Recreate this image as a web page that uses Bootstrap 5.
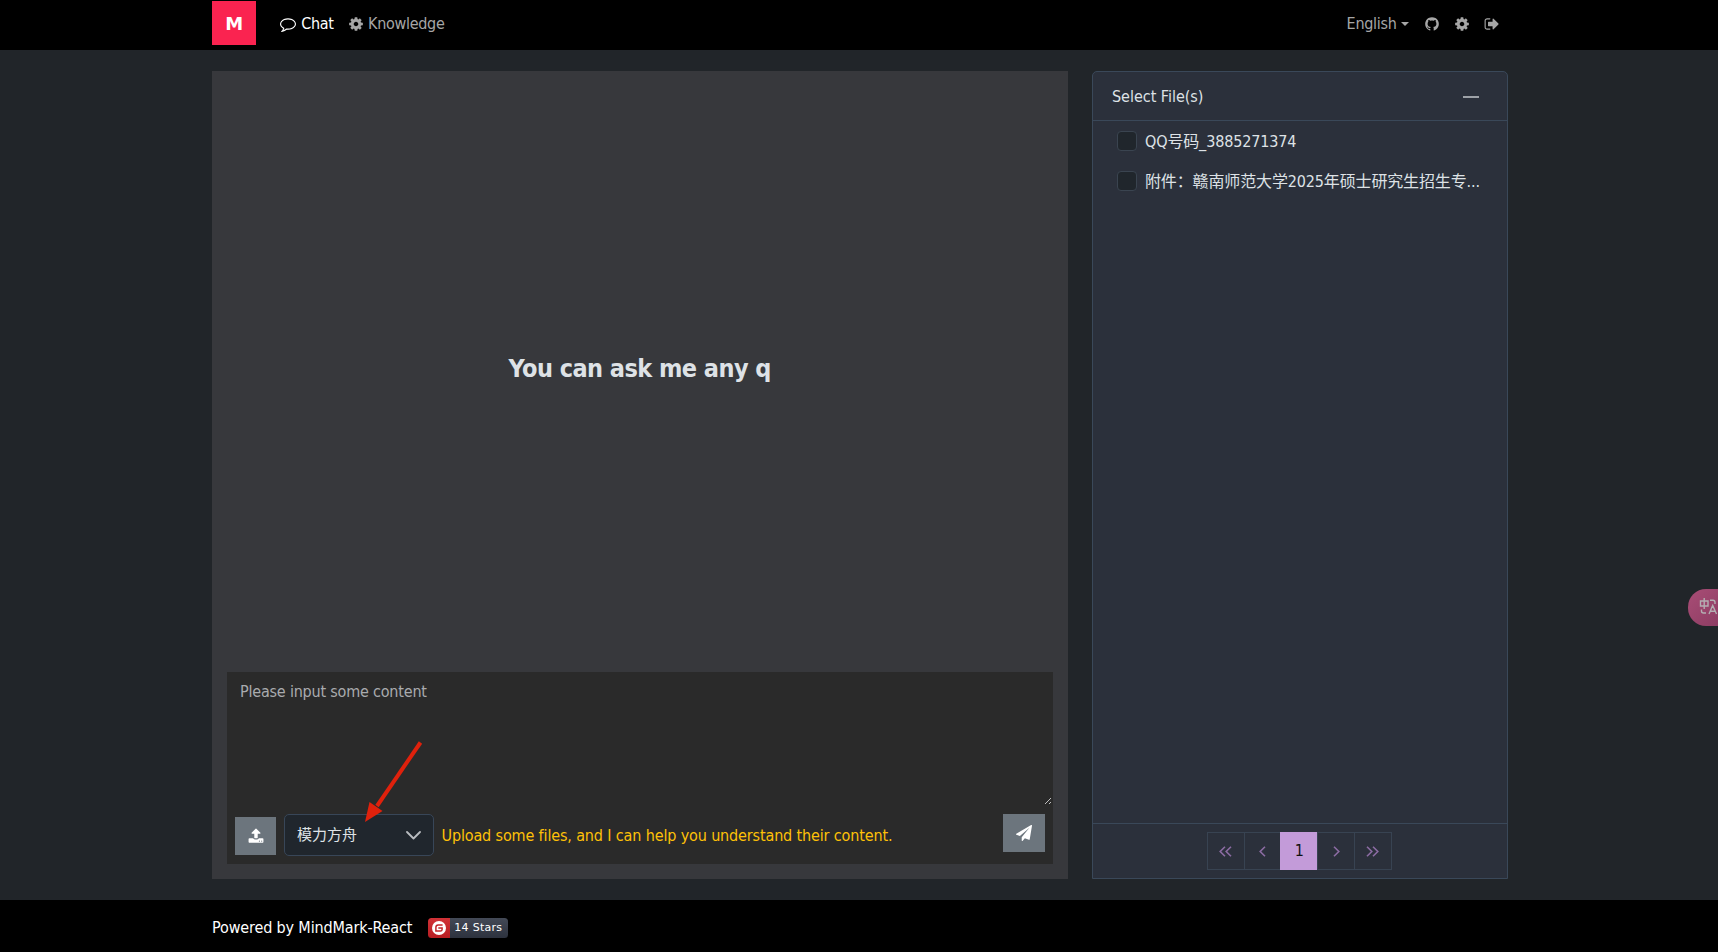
<!DOCTYPE html>
<html lang="en" data-bs-theme="dark">
<head>
<meta charset="utf-8">
<title>MindMark</title>
<link href="https://cdn.jsdelivr.net/npm/bootstrap@5.3.0/dist/css/bootstrap.min.css" rel="stylesheet">
<style>
body{height:952px;overflow:hidden;background:#212529;color:#dee2e6;font-family:"DejaVu Sans Condensed","Noto Sans CJK SC",sans-serif;font-size:16px;letter-spacing:-.14px}
.page-wrap{width:1320px;margin:0 auto;padding:0 11.5px 0 13px}
.topbar{height:50px;background:#000;color:#a6a6a6;padding:0;letter-spacing:-.3px}
.brand-box{width:44px;height:44px;background:#fa2350;color:#fff;font:bold 18px "DejaVu Sans",sans-serif;margin:-4px 24px 0 0}
.fa{fill:currentColor;display:block;flex:none}
.topbar .item{margin-top:-3px;display:flex;align-items:center;white-space:nowrap}
.caret{border:4.5px solid transparent;border-top-color:currentColor;border-bottom:0;margin-left:4px}
main{height:850px;padding:21px 0 21px}
.chat-panel{width:856px;background:#37383c;padding:15px 15.5px 15px 15px}
.hero{font-weight:700;font-size:25px;letter-spacing:-.55px;color:#dee2e6;padding-bottom:21px}
.composer{height:192px;background:#2a2a2a;position:relative}
.composer textarea{height:134px;background:transparent;border:0;padding:8px 13px;resize:none;outline:0;color:#dee2e6;letter-spacing:-.2px}
.composer textarea::placeholder{color:#a9abae;opacity:1}
.grip{position:absolute;right:1px;top:125px}
.sq{background:#6c757d;color:#fff;border:0;border-radius:0;padding:0;display:flex;align-items:center;justify-content:center}
.model{width:150px;height:42px;border:1px solid #384658;border-radius:5px;background:#20262d;padding:1px 12px 0;letter-spacing:0;font-size:15px}
.hint{color:#ffc107}
.files{width:415.5px;background:#2b303b;border:1px solid #3a4859;border-radius:5px 5px 0 0;overflow:hidden}
.files-head{height:49px;border-bottom:1px solid #3a4859;padding:1px 28px 0 19px;letter-spacing:-.02px}
.check{width:20px;height:20px;border:1px solid #3a4450;border-radius:4px;background:#20262c;flex:none;margin-right:8px}
.file-row{height:40px;padding-left:24px;white-space:nowrap}
.file-row .file-name{padding-top:2px}
.files-foot{height:55px;border-top:1px solid #3a4859}
.pager{display:flex;height:38px}
.pager span{width:37.7px;margin-left:-1px;border:1px solid #384352;display:flex;align-items:center;justify-content:center;color:#8c6ca3}
.pager span.on{background:#c39bd9;border-color:#c39bd9;color:#111;width:38px}
.bottombar{height:52px;background:#000;color:#fff;padding-top:3px}
.stars{height:20px;border-radius:3.5px;overflow:hidden;width:80px;font:11px "DejaVu Sans",sans-serif;letter-spacing:.28px;color:#fff;margin-left:16px}
.stars .g{width:22px;height:20px;background:linear-gradient(#d13237,#b81d22)}
.stars .t{background:linear-gradient(#434956,#2d323e);flex:1;height:20px;line-height:20px;padding-left:4px;white-space:nowrap}
.arrow{position:absolute;left:362px;top:738px}
.trans{position:absolute;left:1688px;top:589px;width:30px;height:37px;border-radius:18px 0 0 18px;background:linear-gradient(135deg,#a94d76,#8d3d63);color:#b4aeb2}
</style>
</head>
<body>
<svg width="0" height="0" class="d-none"><defs>
<symbol id="cog" viewBox="0 0 1792 1792"><path d="M1152 896q0-106-75-181t-181-75-181 75-75 181 75 181 181 75 181-75 75-181zm512-109v222q0 12-8 23t-20 13l-185 28q-19 54-39 91 35 50 107 138 10 12 10 25t-9 23q-27 37-99 108t-94 71q-12 0-26-9l-138-108q-44 23-91 38-16 136-29 186-7 28-36 28h-222q-14 0-24.5-8.5t-11.5-21.5l-28-184q-49-16-90-37l-141 107q-10 9-25 9-14 0-25-11-126-114-165-168-7-10-7-23 0-12 8-23 15-21 51-66.5t54-70.5q-27-50-41-99l-183-27q-13-2-21-12.5t-8-23.5v-222q0-12 8-23t19-13l186-28q14-46 39-92-40-57-107-138-10-12-10-24 0-10 9-23 26-36 98.5-107.5t94.5-71.5q13 0 26 10l138 107q44-23 91-38 16-136 29-186 7-28 36-28h222q14 0 24.5 8.5t11.5 21.5l28 184q49 16 90 37l142-107q9-9 24-9 13 0 25 10 129 119 165 170 7 8 7 22 0 12-8 23-15 21-51 66.5t-54 70.5q26 50 41 98l183 28q13 2 21 12.5t8 23.5z"/></symbol>
</defs></svg>
<nav class="topbar"><div class="page-wrap d-flex align-items-center h-100">
  <div class="brand-box d-flex align-items-center justify-content-center">M</div>
  <div class="item text-white"><svg class="fa" width="16" height="16" viewBox="0 0 1792 1792"><path d="M896 384q-204 0-381.5 69.5t-282 187.5-104.5 255q0 112 71.5 213.5t201.5 175.5l87 50-27 96q-24 91-70 172 152-63 275-171l43-38 57 6q69 8 130 8 204 0 381.5-69.5t282-187.5 104.5-255-104.5-255-282-187.5-381.5-69.5zm896 512q0 174-120 321.5t-326 233-450 85.5q-70 0-145-8-198 175-460 242-49 14-114 22h-5q-15 0-27-10.5t-16-27.5v-1q-3-4-.5-12t2-10 4.5-9.5l6-9 7-8.5 8-9q7-8 31-34.5t34.5-38 31-39.5 32.5-51 27-59 26-76q-157-89-247.5-220t-90.5-281q0-174 120-321.5t326-233 450-85.5 450 85.5 326 233 120 321.5z"/></svg><span class="ms-1">&#8202;Chat</span></div>
  <div class="item" style="margin-left:14.5px"><svg class="fa" width="16" height="16"><use href="#cog"/></svg><span class="ms-1">Knowledge</span></div>
  <div class="item ms-auto">English<span class="caret"></span>
    <svg class="fa" style="margin-left:15px" width="16" height="16" viewBox="0 0 1792 1792"><path d="M896 128q209 0 385.5 103t279.5 279.5 103 385.5q0 251-146.5 451.5t-378.5 277.5q-27 5-40-7t-13-30q0-3 .5-76.5t.5-134.5q0-97-52-142 57-6 102.5-18t94-39 81-66.5 53-105 20.5-150.5q0-119-79-206 37-91-8-204-28-9-81 11t-92 44l-38 24q-93-26-192-26t-192 26q-16-11-42.5-27t-83.5-38.5-85-13.5q-45 113-8 204-79 87-79 206 0 85 20.5 150t52.5 105 80.5 67 94 39 102.5 18q-39 36-49 103-21 10-45 15t-57 5-65.5-21.5-55.5-62.5q-19-32-48.5-52t-49.5-24l-20-3q-21 0-29 4.5t-5 11.5 9 14 13 12l7 5q22 10 43.5 38t31.5 51l10 23q13 38 44 61.5t67 30 69.5 7 55.5-3.5l23-4q0 38 .5 88.5t.5 54.5q0 18-13 30t-40 7q-232-77-378.5-277.5t-146.5-451.5q0-209 103-385.5t279.5-279.5 385.5-103z"/></svg>
    <svg class="fa" style="margin-left:14px" width="16" height="16"><use href="#cog"/></svg>
    <svg class="fa" style="margin:0 8px 0 14px" width="16" height="16" viewBox="0 0 1792 1792"><path d="M704 1440q0 4 1 20t.5 26.5-3 23.5-10 19.5-20.5 6.5h-320q-119 0-203.5-84.5t-84.5-203.5v-704q0-119 84.5-203.5t203.5-84.5h320q13 0 22.5 9.5t9.5 22.5q0 4 1 20t.5 26.5-3 23.5-10 19.5-20.5 6.5h-320q-66 0-113 47t-47 113v704q0 66 47 113t113 47h312l11.5 1 11.5 3 8 5.5 7 9 2 13.5zm928-544q0 26-19 45l-544 544q-19 19-45 19t-45-19-19-45v-288h-448q-26 0-45-19t-19-45v-384q0-26 19-45t45-19h448v-288q0-26 19-45t45-19 45 19l544 544q19 19 19 45z"/></svg>
  </div>
</div></nav>
<main><div class="page-wrap d-flex justify-content-between h-100">
  <section class="chat-panel d-flex flex-column">
    <div class="hero flex-grow-1 d-flex align-items-center justify-content-center">You can ask me any q</div>
    <div class="composer">
      <textarea class="w-100 d-block" placeholder="Please input some content"></textarea>
      <svg class="grip" width="8" height="8" viewBox="0 0 8 8" stroke="#c0c0c0" fill="none"><path d="M1 7L7 1M5 7L7 5"/></svg>
      <div class="d-flex align-items-start px-2">
        <button class="sq" style="width:41px;height:38px;margin-top:11px"><svg class="fa" width="16" height="16" viewBox="0 0 1792 1792"><path d="M1344 1472q0-26-19-45t-45-19-45 19-19 45 19 45 45 19 45-19 19-45zm256 0q0-26-19-45t-45-19-45 19-19 45 19 45 45 19 45-19 19-45zm128-224v320q0 40-28 68t-68 28h-1472q-40 0-68-28t-28-68v-320q0-40 28-68t68-28h427q21 56 70.5 92t110.5 36h256q61 0 110.5-36t70.5-92h427q40 0 68 28t28 68zm-325-648q-17 40-59 40h-256v448q0 26-19 45t-45 19h-256q-26 0-45-19t-19-45v-448h-256q-42 0-59-40-17-39 14-69l448-448q18-19 45-19t45 19l448 448q31 30 14 69z"/></svg></button>
        <div class="model d-flex align-items-center justify-content-between ms-2" style="margin-top:8px">模力方舟<svg width="15" height="9" viewBox="0 0 15 9" fill="none" stroke="#b9bcc0" stroke-width="1.8" stroke-linecap="round" stroke-linejoin="round"><path d="M1 1l6.5 6.5L14 1"/></svg></div>
        <div class="hint" style="margin:18px 0 0 7.5px">Upload some files, and I can help you understand their content.</div>
        <button class="sq ms-auto" style="width:42px;height:38px;margin-top:8px"><svg class="fa" width="16" height="16" viewBox="0 0 1792 1792"><path d="M1764 11q33 24 27 64l-256 1536q-5 29-32 45-14 8-31 8-11 0-24-5l-453-185-242 295q-18 23-49 23-13 0-22-4-19-7-30.5-23.5t-11.5-36.5v-349l864-1059-1069 925-395-162q-37-14-40-55-2-40 32-59l1664-960q15-9 32-9 20 0 36 11z"/></svg></button>
      </div>
    </div>
  </section>
  <aside class="files d-flex flex-column">
    <div class="files-head d-flex align-items-center justify-content-between"><span>Select File(s)</span><svg width="16" height="2"><path d="M0 1h16" stroke="#9da1a7" stroke-width="2"/></svg></div>
    <div class="flex-grow-1">
      <div class="file-row d-flex align-items-center"><span class="check"></span><span class="file-name">QQ号码_3885271374</span></div>
      <div class="file-row d-flex align-items-center"><span class="check"></span><span class="file-name">附件：赣南师范大学2025年硕士研究生招生专...</span></div>
    </div>
    <div class="files-foot d-flex align-items-center justify-content-center">
      <div class="pager">
        <span><svg width="13" height="11" viewBox="0 0 13 11" fill="none" stroke="currentColor" stroke-width="1.6"><path d="M6 .8L1.2 5.5 6 10.2M12 .8L7.2 5.5 12 10.2"/></svg></span>
        <span><svg width="7" height="11" viewBox="0 0 7 11" fill="none" stroke="currentColor" stroke-width="1.6"><path d="M6 .8L1.2 5.5 6 10.2"/></svg></span>
        <span class="on">1</span>
        <span><svg width="7" height="11" viewBox="0 0 7 11" fill="none" stroke="currentColor" stroke-width="1.6"><path d="M1 .8L5.8 5.5 1 10.2"/></svg></span>
        <span><svg width="13" height="11" viewBox="0 0 13 11" fill="none" stroke="currentColor" stroke-width="1.6"><path d="M1 .8L5.8 5.5 1 10.2M7 .8L11.8 5.5 7 10.2"/></svg></span>
      </div>
    </div>
  </aside>
</div></main>
<footer class="bottombar"><div class="page-wrap d-flex align-items-center h-100"><span class="foot-text">Powered by MindMark-React</span>
  <div class="stars d-flex"><div class="g d-flex align-items-center justify-content-center"><svg width="14" height="14" viewBox="0 0 14 14"><circle cx="7" cy="7" r="7" fill="#fff"/><path d="M10.6 3.9H6.2Q3.9 3.9 3.9 6.2V10.1H8.4Q10.1 10.1 10.1 8.4V7H6.3" fill="none" stroke="#c4262b" stroke-width="1.5"/></svg></div><div class="t">14 Stars</div></div>
</div></footer>
<svg class="arrow" width="62" height="86" viewBox="0 0 62 86"><path d="M58.5 4.5L15 68" stroke="#df210c" stroke-width="4"/><path d="M3 84L7.500 64L20.500 73Z" fill="#df210c"/></svg>
<div class="trans"><svg width="30" height="37" viewBox="0 0 30 37" fill="none" stroke="currentColor" stroke-width="1.4"><path d="M12.500 12H20V17H12.500ZM16.200 9V20M22 11.200H25Q27 11.200 27 13.500V15M13.500 20.500V22Q13.500 24 15.500 24H18M21 25L24.700 16.500 28.500 25M22.300 22.200H27.200"/></svg></div>
<script src="https://cdn.jsdelivr.net/npm/bootstrap@5.3.0/dist/js/bootstrap.bundle.min.js"></script>
</body>
</html>
